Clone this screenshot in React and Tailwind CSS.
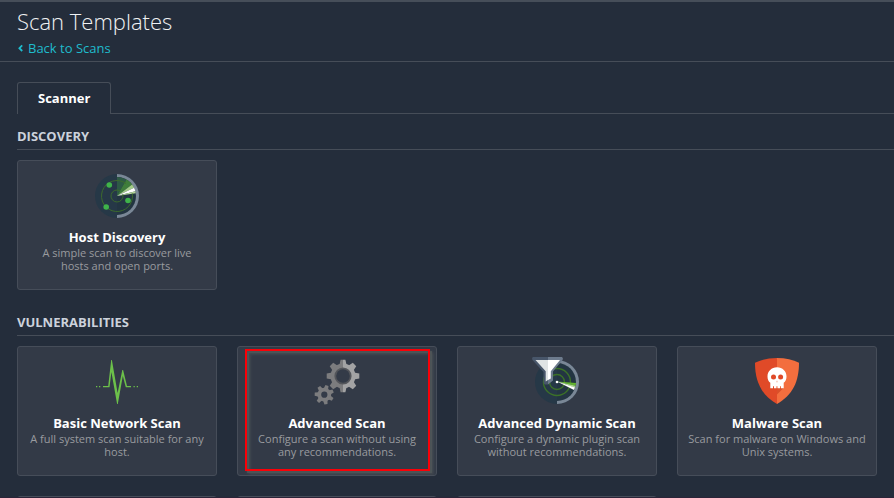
import React from "react";

function RadarIcon() {
  return (
    <svg width="46" height="46" viewBox="0 0 46 46" aria-hidden="true">
      <circle cx="23" cy="23" r="22" fill="#263847" />
      <path d="M23 1a22 22 0 0 1 0 44z" fill="#7a8796" />
      <path d="M23 4a19 19 0 0 1 0 38z" fill="#233542" />
      <path d="M23 23V4a19 19 0 0 1 9.5 2.6z" fill="#2d5a45" />
      <path d="M23 23l9.5-16.4a19 19 0 0 1 5.6 4.8z" fill="#3f7d3b" />
      <path d="M23 23L38.1 11.4a19 19 0 0 1 2 3.3z" fill="#a3cb88" />
      <path d="M23 23l17.1-8.3a19 19 0 0 1 1.3 3.6z" fill="#ffffff" />
      <path d="M23 23l18.4-4.7.3 1.9z" fill="#b5d59b" />
      <g fill="none" stroke="#3c6a2c">
        <path d="M32 10.4A15.5 15.5 0 1 0 38.3 20.5" />
        <path d="M26 17.8A6 6 0 1 0 28.8 21.5" />
      </g>
      <g fill="#3fb34a">
        <circle cx="15.3" cy="12" r="2.8" />
        <circle cx="34" cy="27.5" r="2.8" />
        <circle cx="12.2" cy="34" r="2.8" />
      </g>
    </svg>
  );
}

function PulseIcon() {
  return (
    <svg width="46" height="46" viewBox="0 0 46 46" aria-hidden="true">
      <path d="M9 27H14.2L17.2 1H17.9L23.6 34L28.3 11H29.1L33 27H37V28.3H31.8L28.8 17L23.8 45H23.1L17.4 13L15.5 28.3H9z" fill="#6cc04a" />
      <path d="M2 27h1.3v1.3H2zM5 27h1.3v1.3H5zM39.5 27h1.3v1.3h-1.3zM42.7 27H44v1.3h-1.3z" fill="#6cc04a" />
    </svg>
  );
}

const BIG_TEETH = [0, 45, 90, 135, 180, 225, 270, 315];
const SMALL_TEETH = [16, 67, 119, 170, 222, 273, 325];

function BigGear({ color }) {
  return (
    <g fill={color}>
      <circle cx="29" cy="17" r="12.5" />
      {BIG_TEETH.map((a) => (
        <path key={a} d="M25.4 6L26.6.7H31.4L32.6 6z" transform={`rotate(${a} 29 17)`} />
      ))}
    </g>
  );
}

function GearsIcon() {
  return (
    <svg width="46" height="46" viewBox="0 0 46 46" aria-hidden="true">
      <defs>
        <clipPath id="gear-left"><path d="M0 0h29v46H0z" /></clipPath>
        <clipPath id="gear-right"><path d="M29 0h17v46H29z" /></clipPath>
      </defs>
      <g clipPath="url(#gear-left)"><BigGear color="#7c7c7e" /></g>
      <g clipPath="url(#gear-right)"><BigGear color="#a3a3a4" /></g>
      <circle cx="29" cy="17" r="8.6" fill="#54565b" />
      <circle cx="29" cy="17" r="6.8" fill="#343b48" />
      <g fill="#7c7c7e">
        <circle cx="10.3" cy="35.7" r="6.9" />
        {SMALL_TEETH.map((a) => (
          <path key={a} d="M8 30.5L8.7 26.1H11.9L12.6 30.5z" transform={`rotate(${a} 10.3 35.7)`} />
        ))}
      </g>
      <circle cx="10.3" cy="35.7" r="3.1" fill="#343b48" />
    </svg>
  );
}

function FilterRadarIcon() {
  return (
    <svg className="overflow-visible" width="46" height="46" viewBox="0 0 46 46" aria-hidden="true">
      <circle cx="23" cy="23" r="22" fill="#263847" />
      <path d="M23 1a22 22 0 0 1 0 44z" fill="#7a8796" />
      <path d="M23 4a19 19 0 0 1 0 38z" fill="#233542" />
      <g fill="none" stroke="#3c7128" strokeWidth="1.4">
        <circle cx="23" cy="23" r="13.5" />
        <circle cx="23" cy="23" r="7.5" />
      </g>
      <path d="M23 22.5L42 24l-.4 2.8z" fill="#62b32e" />
      <path d="M23 22.5l18.6 4.3-.6 2z" fill="#a9d78b" />
      <path d="M23 22.5l18 6.1-1 2.4z" fill="#ffffff" />
      <circle cx="23" cy="23" r="1.3" fill="#ffffff" />
      <path d="M-1.2-2H14V25.5H11Q9.5 25 9.5 23V13L-1.6 1Q-2.5-1-1.2-2z" fill="#48566a" />
      <path d="M14-2H28Q29.5-1 28.6 1L19 12.5V21.5L14 25.5z" fill="#6d7b8d" />
      <path d="M1.5 1H14V21L11.7 22.5V12.2z" fill="#dfe3e4" />
      <path d="M14 1H26L16.8 12.2V19.6L14 21z" fill="#ffffff" />
    </svg>
  );
}

function ShieldIcon() {
  return (
    <svg className="overflow-visible" width="46" height="46" viewBox="0 0 46 46" aria-hidden="true">
      <path d="M23-1Q10-1 1 3.8C1 22 7 36 23 45z" fill="#e04a28" />
      <path d="M23-1Q36-1 45 3.8C45 22 39 36 23 45z" fill="#f36e3e" />
      <path d="M23 35.5L29.5 29H23z" fill="#d9502b" />
      <path d="M23 8.3C28.5 8.3 32.5 12.3 32.5 17.5C32.5 20.5 31.5 22.5 29.7 23.8V29.3H27V27.3H26V29.3H23.5V27.3H22.5V29.3H20V27.3H19V29.3H16.3V23.8C14.5 22.5 13.5 20.5 13.5 17.5C13.5 12.3 17.5 8.3 23 8.3z" fill="#ffffff" />
      <circle cx="19.5" cy="18" r="2.5" fill="#e04a28" />
      <circle cx="26.6" cy="18" r="2.5" fill="#e04a28" />
      <path d="M23 21.3l1.1 2h-2.2z" fill="#f7c4b4" />
    </svg>
  );
}

const cardBox = "min-h-[130px] w-[200px] rounded-[3px] border border-[#464d59] bg-[#333a47]";

function TemplateCard({ icon, title, children, highlighted }) {
  return (
    <a href="#" className={`relative block px-[10px] pt-3 text-center ${cardBox}`}>
      <span className="flex h-[46px] justify-center">{icon}</span>
      <h3 className="mt-[9px] text-[13px] leading-[18px] font-bold text-white">{title}</h3>
      <p className="text-[11px] leading-[13px] text-[#999b9f]">{children}</p>
      {highlighted && (
        <span className="pointer-events-none absolute top-[2px] right-[6px] bottom-[4px] left-[7px] border-2 border-[#fb0007] [filter:drop-shadow(2px_2px_0_rgba(85,92,92,0.6))_drop-shadow(2px_2px_1px_rgba(85,92,92,0.6))]" />
      )}
    </a>
  );
}

function Section({ title, children }) {
  return (
    <section className="pt-[10px] pb-[10px]">
      <h2 className="border-b border-[#464d58] pb-px text-[13px] leading-6 font-bold text-[#ccd2dc] uppercase">{title}</h2>
      <div className="flex flex-wrap gap-5 pt-[10px]">{children}</div>
    </section>
  );
}

export default function App() {
  return (
    <div className="h-screen overflow-hidden border-t-2 border-b border-t-[#464e59] border-b-[#2b2438] bg-[#242d3b] font-['Open_Sans',sans-serif]">
      <header className="border-b border-[#464d58] px-[17px] pt-[3px] pb-[3px]">
        <h1 className="mb-px text-[22px] leading-8 font-light text-[#f0f2f4]">Scan Templates</h1>
        <a href="#" className="flex items-center gap-1 text-[13px] leading-5 text-[#1fbccd]">
          <svg width="7" height="8" viewBox="0 0 7 8" fill="none" stroke="currentColor" strokeWidth="1.8" aria-hidden="true">
            <path d="M5.2 1.4L2.4 4.2L5.2 7" />
          </svg>
          Back to Scans
        </a>
      </header>
      <main className="pt-5 pl-[17px]">
        <div className="flex">
          <button type="button" className="rounded-t-[3px] border border-b-0 border-[#464d58] px-5 pb-px text-[13px] leading-[30px] font-bold text-white">
            Scanner
          </button>
          <span className="flex-1 border-b border-[#464d58]" />
        </div>
        <Section title="Discovery">
          <TemplateCard icon={<RadarIcon />} title="Host Discovery">
            A simple scan to discover live hosts and open ports.
          </TemplateCard>
        </Section>
        <Section title="Vulnerabilities">
          <TemplateCard icon={<PulseIcon />} title="Basic Network Scan">
            A full system scan suitable for any host.
          </TemplateCard>
          <TemplateCard icon={<GearsIcon />} title="Advanced Scan" highlighted>
            Configure a scan without using any recommendations.
          </TemplateCard>
          <TemplateCard icon={<FilterRadarIcon />} title="Advanced Dynamic Scan">
            Configure a dynamic plugin scan without recommendations.
          </TemplateCard>
          <TemplateCard icon={<ShieldIcon />} title="Malware Scan">
            Scan for malware on Windows and Unix systems.
          </TemplateCard>
          <div className={cardBox} />
          <div className={cardBox} />
          <div className={cardBox} />
        </Section>
      </main>
    </div>
  );
}
